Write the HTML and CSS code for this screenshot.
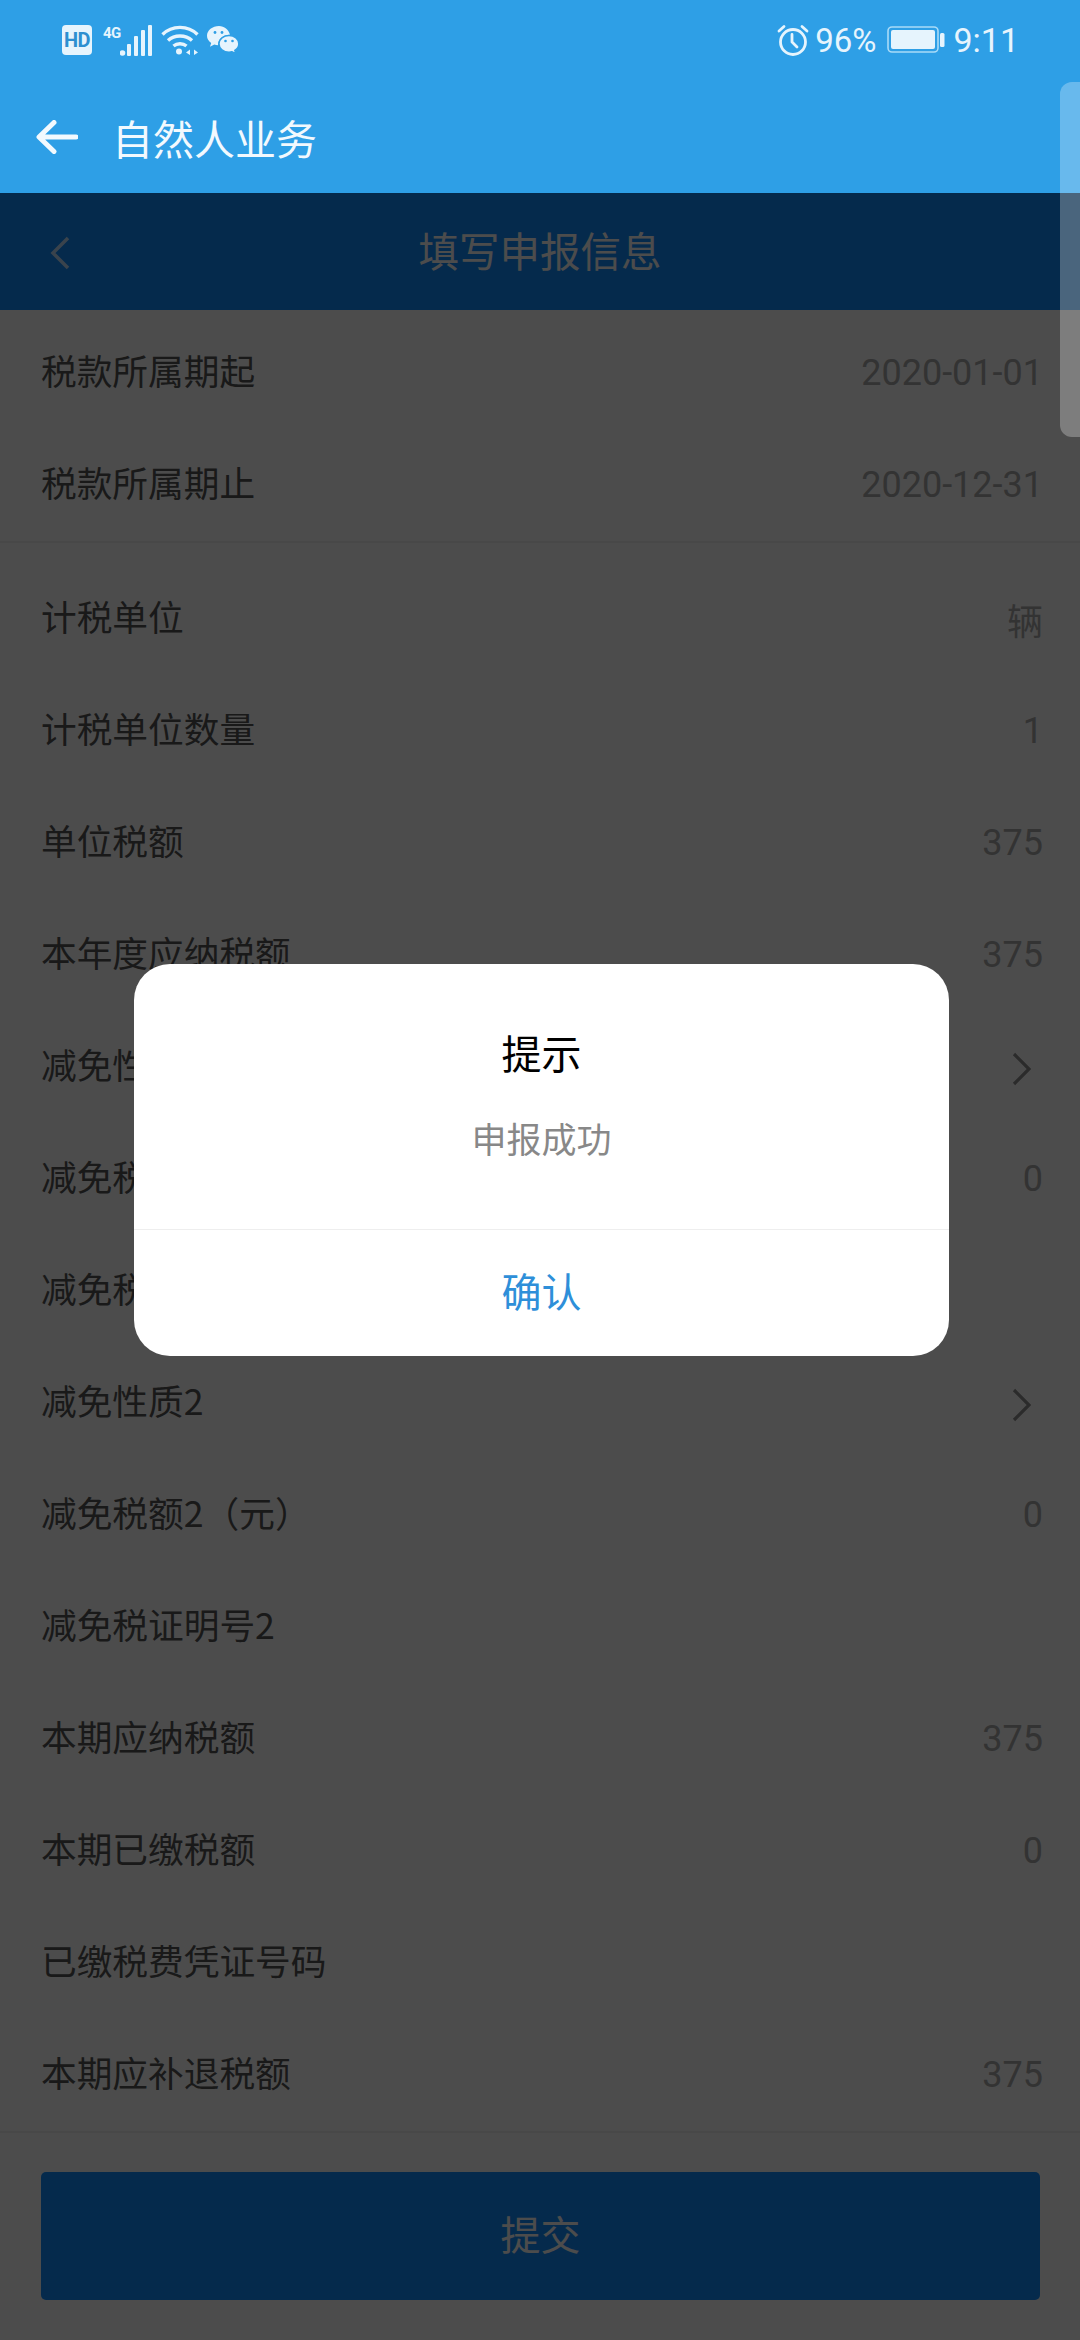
FILE: index.html
```html
<!DOCTYPE html>
<html lang="zh-CN">
  <head>
    <meta charset="UTF-8" />
    <meta name="viewport" content="width=device-width, initial-scale=1" />
    <title>自然人业务</title>
    <link rel="stylesheet" href="styles.css">
  </head>
  <body>
    <header class="app-head">
      <div class="status-bar">
        <div class="status-left">
          <span class="hd">HD</span>
          <span class="net">4G</span>
          <svg class="signal" width="32" height="31" viewBox="0 0 32 31"><g fill="#e6f4fd"><circle cx="2.500" cy="28" r="2.800"/><rect x="7" y="19" width="4" height="12" rx="1"/><rect x="14" y="11" width="4" height="20" rx="1"/><rect x="21" y="5" width="4" height="26" rx="1"/><rect x="28" y="0" width="4" height="31" rx="1"/></g></svg>
          <svg class="wifi" width="38" height="30" viewBox="0 0 38 30"><g fill="none" stroke="#e6f4fd" stroke-width="3.400"><path d="M1.500 9.500C11 0 27 0 36.500 9.500"/><path d="M7 15.500C13.500 9.500 24.500 9.500 31 15.500"/><path d="M12.500 21C16 18 22 18 25.500 21"/></g><g fill="#e6f4fd"><circle cx="18" cy="26.500" r="3"/><path d="M29 24.500l-4 3 4 2.500zM33 24.500l4 3-4 2.500z"/></g></svg>
          <svg class="wechat" width="32" height="28" viewBox="0 0 32 28"><path fill="#e6f4fd" d="M12 0C5.500 0 0 4.300 0 9.800c0 3 1.600 5.500 4.200 7.300L3 20.800l4.300-2.200c1.200.4 2.500.6 3.800.6C10.800 13 15.800 8.500 23 8.700 21.700 3.700 17.300 0 12 0z"/><path fill="#e6f4fd" stroke="#2e9fe6" stroke-width="1.400" d="M22 9.500c-5.500 0-10 3.700-10 8.300s4.500 8.300 10 8.300c1 0 2-.1 3-.4l3.800 2-1-3.300c2.500-1.500 4-3.900 4-6.600 0-4.600-4.300-8.300-9.800-8.300z"/><g fill="#2e9fe6"><circle cx="8" cy="6.500" r="1.400"/><circle cx="15" cy="6.500" r="1.400"/><circle cx="18.500" cy="15" r="1.300"/><circle cx="25.500" cy="15" r="1.300"/></g></svg>
        </div>
        <div class="status-right">
          <svg class="alarm" width="32" height="32" viewBox="0 0 32 32"><g fill="none" stroke="#e6f4fd" stroke-width="2.800" stroke-linecap="round"><circle cx="16" cy="18" r="12.500"/><path d="M15 10.500V18l5 5"/><path d="M2 7l5-4.500M30 7l-5-4.500"/></g></svg>
          <span class="pct">96%</span>
          <svg class="battery" width="58" height="28" viewBox="0 0 58 28"><rect x="1" y="1" width="50" height="25" rx="4" fill="none" stroke="#a9dbf8" stroke-width="1.600"/><rect x="4" y="4" width="44" height="19" rx="2" fill="#e6f4fd"/><rect x="53" y="7" width="4.500" height="14" rx="1.500" fill="#e6f4fd"/></svg>
          <span class="clock">9:11</span>
        </div>
      </div>
      <div class="app-bar">
        <svg class="app-back" width="42" height="34" viewBox="0 0 42 34"><path d="M40 17H4M18 2.500L3 17l15 14.500" fill="none" stroke="#f2f9fe" stroke-width="5" stroke-linecap="round" stroke-linejoin="round"/></svg>
        <span class="app-title">自然人业务</span>
      </div>
    </header>

    <main class="web">
      <div class="nav">
        <svg class="nav-back" width="20" height="34" viewBox="0 0 20 34"><path d="M18 2L3 17l15 15" fill="none" stroke="#fff" stroke-opacity=".75" stroke-width="3.500"/></svg>
        <h1>填写申报信息</h1>
      </div>

      <section class="group first">
        <div class="row"><span>税款所属期起</span><em>2020-01-01</em></div>
        <div class="row"><span>税款所属期止</span><em>2020-12-31</em></div>
      </section>

      <section class="group">
        <div class="row"><span>计税单位</span><em>辆</em></div>
        <div class="row"><span>计税单位数量</span><em>1</em></div>
        <div class="row"><span>单位税额</span><em>375</em></div>
        <div class="row"><span>本年度应纳税额</span><em>375</em></div>
        <div class="row"><span>减免性质1</span><svg class="more" width="20" height="34" viewBox="0 0 20 34"><path d="M3 2l15 15L3 32" fill="none" stroke="#909090" stroke-width="3.200"/></svg></div>
        <div class="row"><span>减免税额1（元）</span><em>0</em></div>
        <div class="row"><span>减免税证明号1</span></div>
        <div class="row"><span>减免性质2</span><svg class="more" width="20" height="34" viewBox="0 0 20 34"><path d="M3 2l15 15L3 32" fill="none" stroke="#909090" stroke-width="3.200"/></svg></div>
        <div class="row"><span>减免税额2（元）</span><em>0</em></div>
        <div class="row"><span>减免税证明号2</span></div>
        <div class="row"><span>本期应纳税额</span><em>375</em></div>
        <div class="row"><span>本期已缴税额</span><em>0</em></div>
        <div class="row"><span>已缴税费凭证号码</span></div>
        <div class="row"><span>本期应补退税额</span><em>375</em></div>
      </section>

      <button class="submit">提交</button>

      <div class="scrim">
        <div class="dialog">
          <div class="dialog-body">
            <h2>提示</h2>
            <p>申报成功</p>
          </div>
          <div class="dialog-ok">确认</div>
        </div>
      </div>
    </main>

    <div class="scrollbar"></div>
  </body>
</html>
```

FILE: styles.css
```css
* {
  box-sizing: border-box;
}
html,
body {
  margin: 0;
  height: 2340px;
  overflow: hidden;
}
body {
  font-family: "Noto Sans CJK SC", "Noto Sans", sans-serif;
  background: #fff;
  position: relative;
}

/* status + app bar */
.app-head {
  height: 193px;
  background: #2e9fe6;
  color: #f2f9fe;
}
.status-bar {
  height: 81px;
  padding: 25px 61px 0 62px;
  display: flex;
  justify-content: space-between;
  align-items: flex-start;
}
.status-left,
.status-right {
  display: flex;
  align-items: center;
  height: 30px;
}
.hd {
  width: 30px;
  height: 30px;
  border-radius: 4px;
  background: #e6f4fd;
  color: #2e8fd0;
  font: bold 20px/30px "Roboto", sans-serif;
  letter-spacing: -0.5px;
  text-align: center;
}
.net {
  width: 19px;
  margin: -15px 0 0 11px;
  font: bold 15px/16px "Roboto", sans-serif;
  letter-spacing: -0.5px;
  color: #e6f4fd;
}
.signal {
  margin-left: -2px;
}
.wifi {
  margin-left: 9px;
}
.wechat {
  margin-left: 8px;
}
.status-right {
  color: #e6f4fd;
  font-family: "Roboto", sans-serif;
}
.alarm {
  margin-right: 6px;
}
.pct {
  font-size: 33px;
  margin-right: 11px;
}
.clock {
  font-size: 34px;
  margin-left: 8px;
}
.app-bar {
  height: 112px;
  padding-left: 36px;
  display: flex;
  align-items: center;
  gap: 34px;
}
.app-title {
  font-size: 41px;
}

/* dimmed page */
.web {
  position: relative;
  height: 2147px;
  background: #fff;
}
.nav {
  height: 117px;
  padding-bottom: 5px;
  background: #118dfd;
  position: relative;
  display: flex;
  align-items: center;
  justify-content: center;
}
.nav h1 {
  margin: 0;
  font-size: 40.500px;
  font-weight: 400;
  color: #fff;
}
.nav-back {
  position: absolute;
  left: 50px;
  top: 43px;
}
.group {
  border-bottom: 2px solid #f2f2f2;
  margin-bottom: 20px;
}
.group.first {
  padding-top: 7px;
}
.row {
  height: 112px;
  padding: 0 37px 0 41px;
  display: flex;
  justify-content: space-between;
  align-items: center;
  font-size: 35.700px;
  color: #555;
}
.row span {
  padding-bottom: 7px;
}
.row em {
  font-family: "Roboto", sans-serif;
  font-style: normal;
  font-size: 36px;
  color: #aaa;
}
.row .more {
  margin: 3px 12px 0 0;
}
.submit {
  display: block;
  width: 999px;
  height: 128px;
  margin: 39px 0 0 41px;
  padding: 0 0 6px;
  border: none;
  border-radius: 5px;
  background: #118dfd;
  color: #fff;
  font-family: inherit;
  font-size: 40px;
}

/* dialog */
.scrim {
  position: absolute;
  inset: 0;
  background: rgba(0, 0, 0, 0.7);
  padding: 771px 131px 0 134px;
}
.dialog {
  height: 392px;
  background: #fff;
  border-radius: 36px;
  text-align: center;
  overflow: hidden;
}
.dialog-body {
  height: 266px;
  padding-top: 59px;
  border-bottom: 1px solid #eee;
}
.dialog h2 {
  margin: 0;
  font-size: 40px;
  font-weight: 400;
  line-height: 58px;
  color: #000;
}
.dialog p {
  margin: 32px 0 0;
  font-size: 35px;
  line-height: 50px;
  color: #888;
}
.dialog-ok {
  height: 126px;
  font-size: 40px;
  line-height: 120px;
  color: #2e8fd9;
}

.scrollbar {
  position: absolute;
  top: 82px;
  right: 0;
  width: 20px;
  height: 355px;
  background: rgba(255, 255, 255, 0.28);
  border-radius: 12px 0 0 12px;
}
```
